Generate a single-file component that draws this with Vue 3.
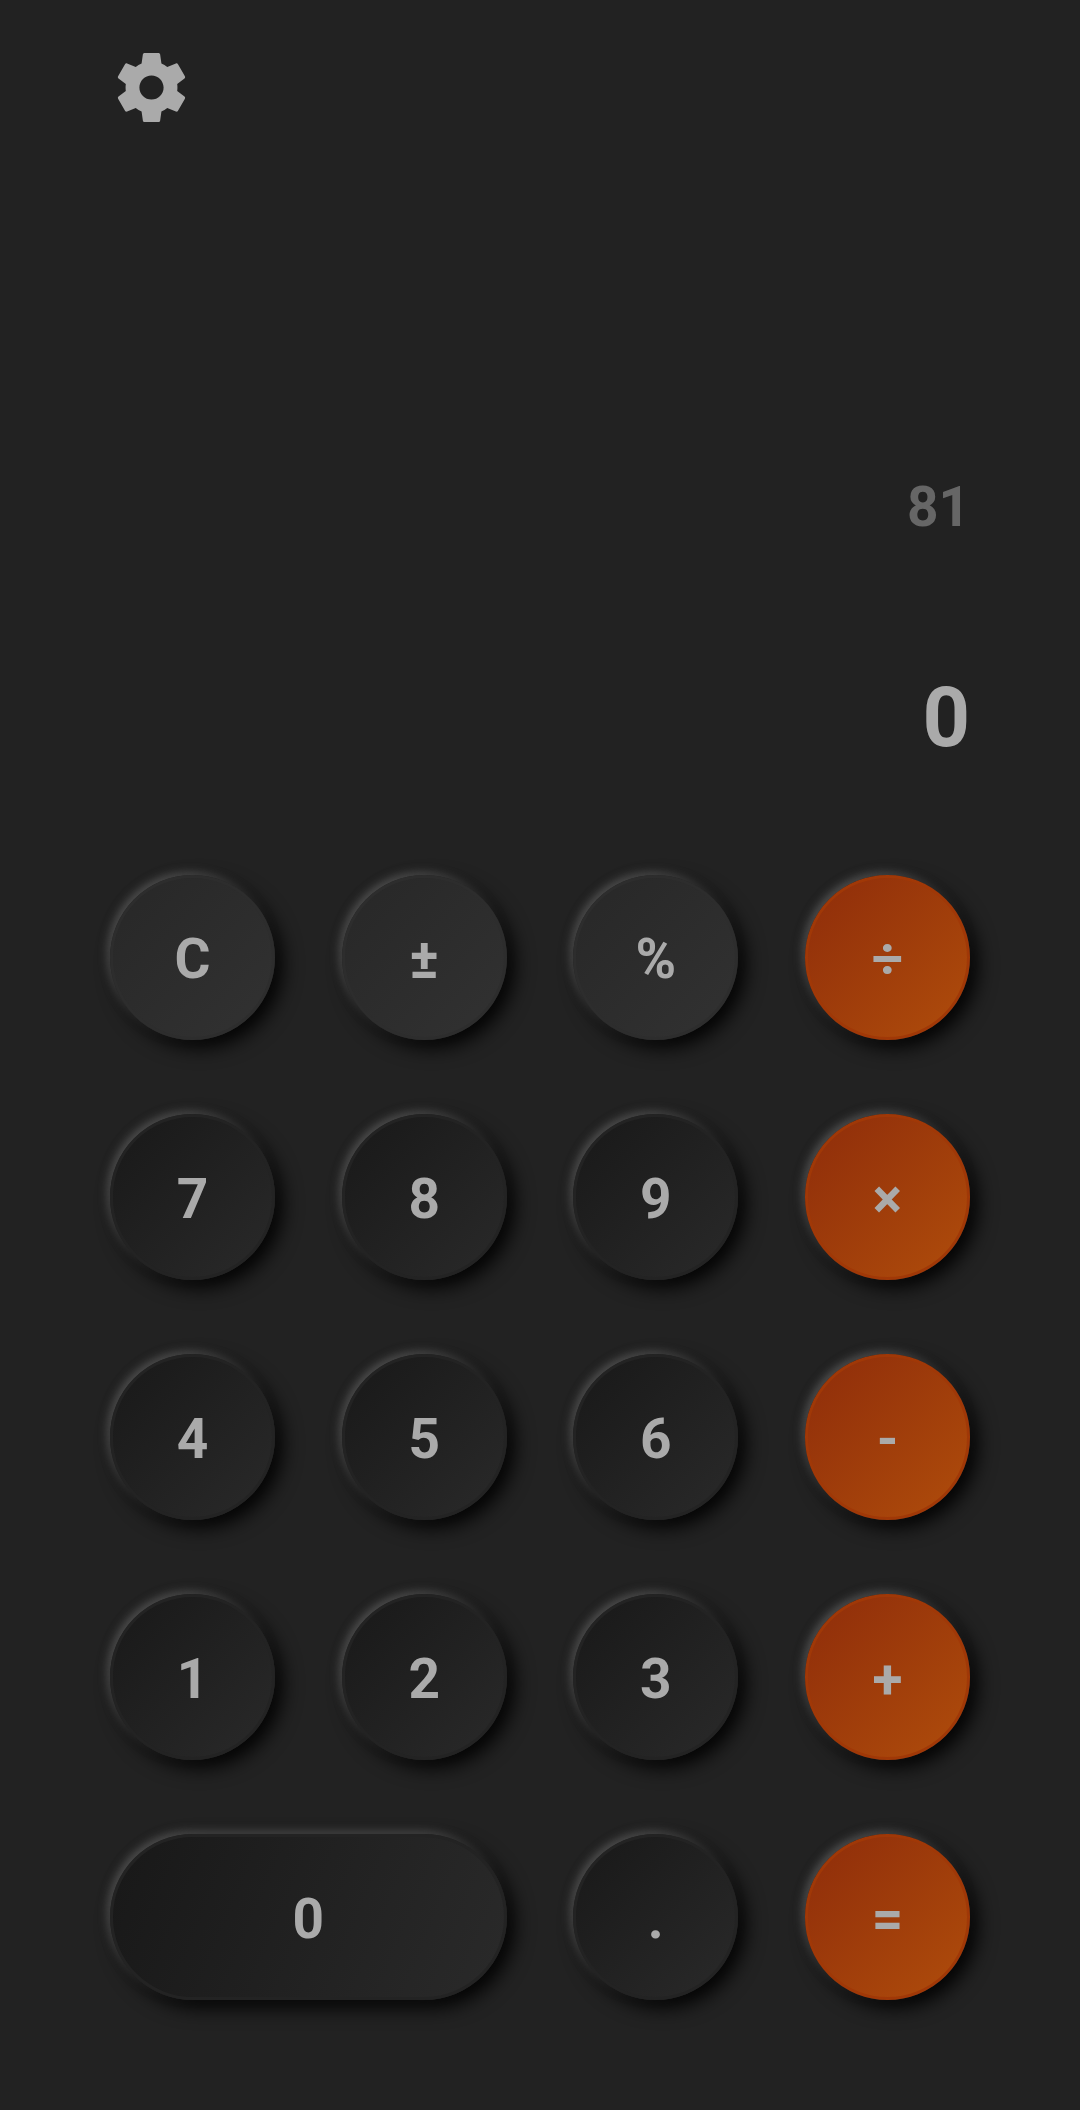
<script setup>
const keys = [
  { label: 'C', kind: 'fn' },
  { label: '±', kind: 'fn' },
  { label: '%', kind: 'fn' },
  { label: '÷', kind: 'op' },
  { label: '7' },
  { label: '8' },
  { label: '9' },
  { label: '×', kind: 'op' },
  { label: '4' },
  { label: '5' },
  { label: '6' },
  { label: '-', kind: 'op' },
  { label: '1' },
  { label: '2' },
  { label: '3' },
  { label: '+', kind: 'op' },
  { label: '0', kind: 'wide' },
  { label: '.' },
  { label: '=', kind: 'op' },
]
</script>

<template>
  <main class="calculator">
    <header class="toolbar">
      <button class="settings" aria-label="Settings">
        <svg viewBox="0 0 24 24">
          <path d="M19.43 12.98c.04-.32.07-.64.07-.98s-.03-.66-.07-.98l2.11-1.65c.19-.15.24-.42.12-.64l-2-3.46c-.12-.22-.39-.3-.61-.22l-2.49 1c-.52-.4-1.08-.73-1.69-.98l-.38-2.65C14.46 2.18 14.25 2 14 2h-4c-.25 0-.46.18-.49.42l-.38 2.65c-.61.25-1.17.59-1.69.98l-2.49-1c-.23-.09-.49 0-.61.22l-2 3.46c-.13.22-.07.49.12.64l2.11 1.65c-.04.32-.07.65-.07.98s.03.66.07.98l-2.11 1.65c-.19.15-.24.42-.12.64l2 3.46c.12.22.39.3.61.22l2.49-1c.52.4 1.08.73 1.69.98l.38 2.65c.03.24.24.42.49.42h4c.25 0 .46-.18.49-.42l.38-2.65c.61-.25 1.17-.59 1.69-.98l2.49 1c.23.09.49 0 .61-.22l2-3.46c.12-.22.07-.49-.12-.64l-2.11-1.65zM12 15.5c-1.93 0-3.5-1.57-3.5-3.5s1.57-3.5 3.5-3.5 3.5 1.57 3.5 3.5-1.57 3.5-3.5 3.5z" />
        </svg>
      </button>
    </header>

    <section class="display">
      <div class="history">81</div>
      <div class="current">0</div>
    </section>

    <section class="keypad">
      <button v-for="key in keys" :key="key.label" class="key" :class="key.kind">
        <span>{{ key.label }}</span>
      </button>
    </section>
  </main>
</template>

<style>
body {
  background: #222222;
}
</style>

<style scoped>
.calculator {
  box-sizing: border-box;
  height: 2110px;
  padding: 46px 110px 0;
  background: #222222;
  color: #aaaaaa;
  font-family: Roboto, sans-serif;
  font-weight: 700;
}

button {
  margin: 0;
  padding: 0;
  border: 0;
  background: none;
  color: inherit;
  font: inherit;
}

.toolbar {
  height: 83px;
}

.settings {
  display: block;
  width: 83px;
  height: 83px;
}

.settings svg {
  display: block;
  width: 100%;
  height: 100%;
  fill: #aaaaaa;
}

.display {
  box-sizing: border-box;
  height: 745.5px;
  padding-top: 338px;
  text-align: right;
}

.history {
  height: 80px;
  line-height: 80px;
  font-size: 55px;
  color: #666666;
}

.current {
  height: 100px;
  margin-top: 121px;
  line-height: 100px;
  font-size: 83px;
}

.keypad {
  display: grid;
  grid-template-columns: repeat(4, 165px);
  grid-auto-rows: 165.3px;
  justify-content: space-between;
  row-gap: 74.7px;
}

.key {
  box-sizing: border-box;
  display: flex;
  align-items: center;
  justify-content: center;
  padding-top: 4px;
  border: 3px solid #232323;
  border-radius: 83px;
  background: linear-gradient(135deg, #181818, #2a2a2a) border-box;
  box-shadow: 7px 7px 20px #000000, -2.75px -2.75px 8px #5a5a5a;
  font-size: 55px;
  line-height: 66px;
}

.fn {
  border-color: #2d2d2d;
  background-image: linear-gradient(135deg, #272727, #323232);
}

.op {
  border-color: #a03807;
  background-image: linear-gradient(135deg, #8e2c0a, #b04d0b);
}

.wide {
  grid-column: span 2;
  background-image: linear-gradient(112.6deg, #181818, #2a2a2a);
}
</style>
